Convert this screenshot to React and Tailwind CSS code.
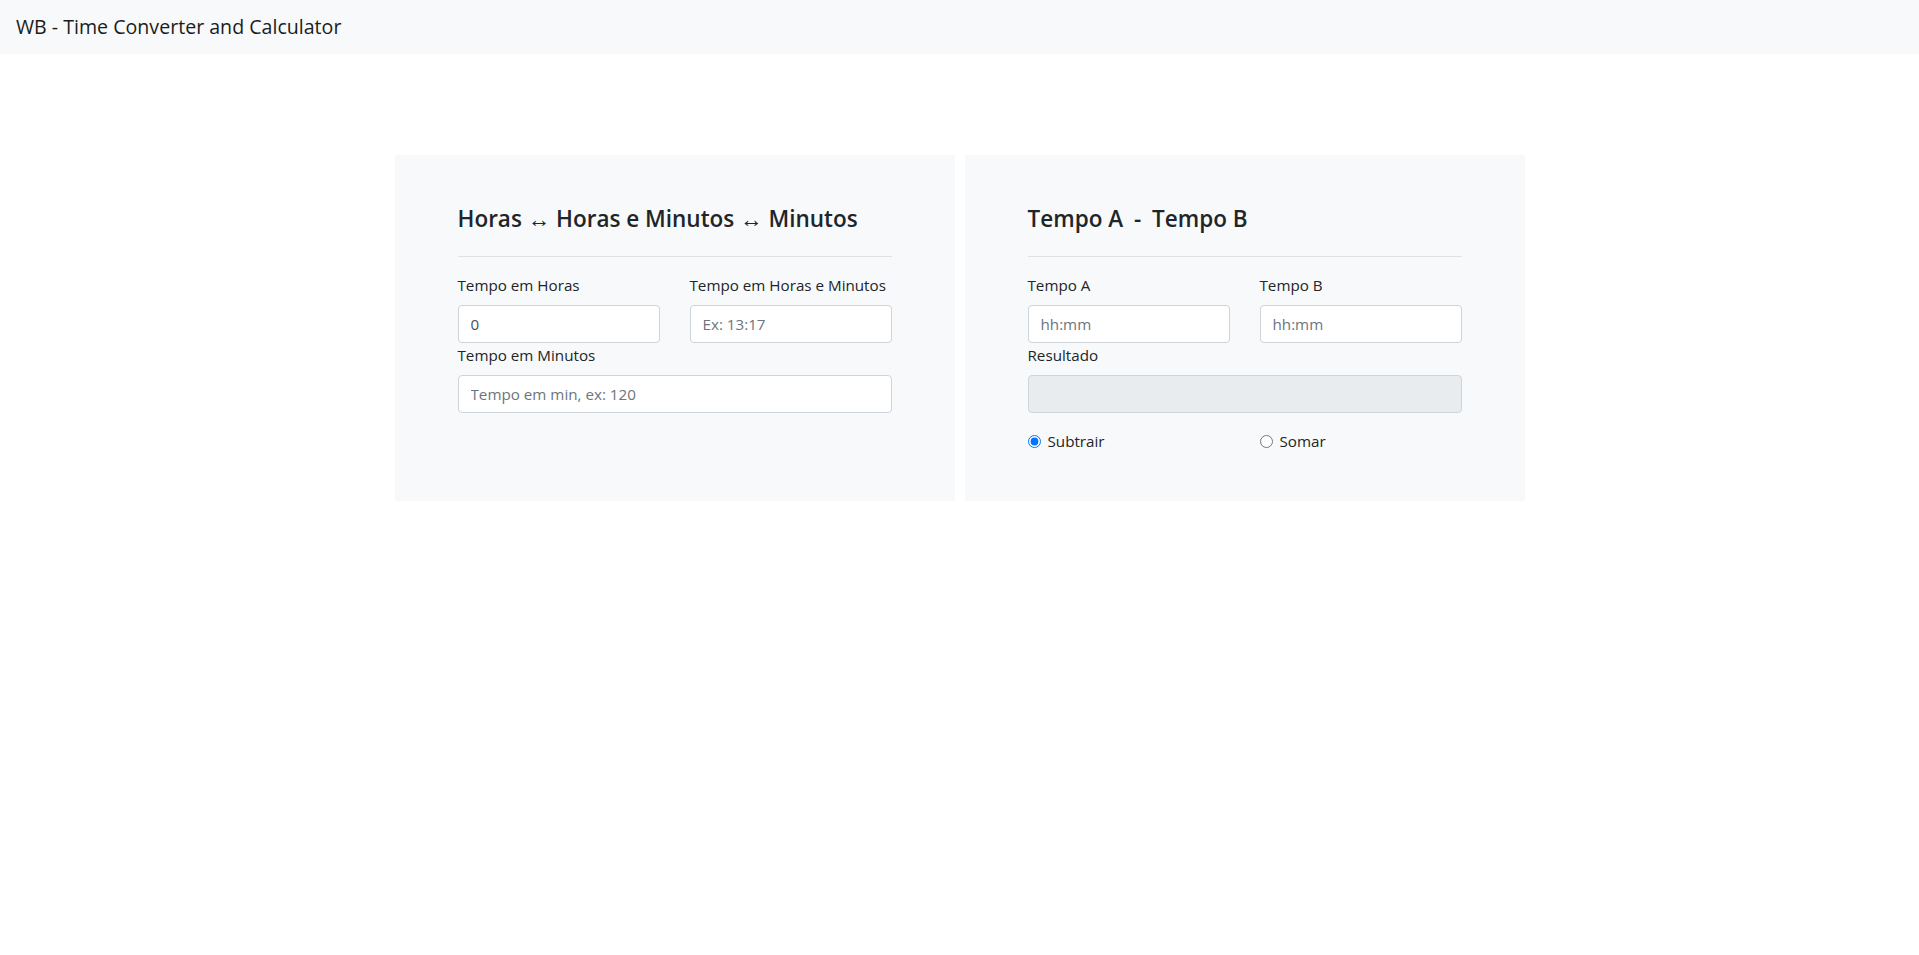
import { useState } from 'react'

const FONT = { fontFamily: '"Open Sans", sans-serif' }

function Field({ label, placeholder, value, disabled, className = '' }) {
  return (
    <div className={className}>
      <label className="block whitespace-nowrap text-[15.2px] leading-[24px] mb-2 text-[#212529]">{label}</label>
      <input
        type="text"
        disabled={disabled}
        defaultValue={value}
        placeholder={placeholder}
        className={`block w-full h-[38px] px-3 rounded-[4px] border border-[#ced4da] text-[15.2px] text-[#495057] placeholder:text-[#6c757d] outline-none ${disabled ? 'bg-[#e9ecef]' : 'bg-white'}`}
      />
    </div>
  )
}

function Panel({ title, children }) {
  return (
    <div className="w-[560px] h-[346px] bg-[#f8f9fa] px-[63px] pt-[49px]">
      <h4 className="text-[22.5px] leading-[29px] font-semibold text-[#212529]">{title}</h4>
      <hr className="mt-[23px] mb-[16px] border-0 border-t border-[#dfe0e1]" />
      {children}
    </div>
  )
}

export default function App() {
  const [op, setOp] = useState('sub')
  return (
    <div className="min-h-screen bg-white text-[#212529]" style={FONT}>
      <nav className="h-[54px] bg-[#f8f9fa] px-4 flex items-center">
        <span className="text-[19.6px] text-[#1a1d20]">WB - Time Converter and Calculator</span>
      </nav>

      <div className="flex justify-center gap-[10px] pt-[101px]">
        <Panel title="Horas ↔ Horas e Minutos ↔ Minutos">
          <div className="grid grid-cols-2 gap-x-[30px]">
            <Field label="Tempo em Horas" value="0" />
            <Field label="Tempo em Horas e Minutos" placeholder="Ex: 13:17" />
          </div>
          <Field label="Tempo em Minutos" placeholder="Tempo em min, ex: 120" />
        </Panel>

        <Panel title={<>Tempo A <span className="px-[5px]">-</span> Tempo B</>}>
          <div className="grid grid-cols-2 gap-x-[30px]">
            <Field label="Tempo A" placeholder="hh:mm" />
            <Field label="Tempo B" placeholder="hh:mm" />
          </div>
          <Field label="Resultado" disabled />
          <div className="grid grid-cols-2 gap-x-[30px] mt-4 text-[15.2px] leading-[24px]">
            <label className="flex items-center gap-[7px]">
              <input type="radio" name="op" className="m-0 w-[13px] h-[13px]" checked={op === 'sub'} onChange={() => setOp('sub')} />
              Subtrair
            </label>
            <label className="flex items-center gap-[7px]">
              <input type="radio" name="op" className="m-0 w-[13px] h-[13px]" checked={op === 'add'} onChange={() => setOp('add')} />
              Somar
            </label>
          </div>
        </Panel>
      </div>
    </div>
  )
}
